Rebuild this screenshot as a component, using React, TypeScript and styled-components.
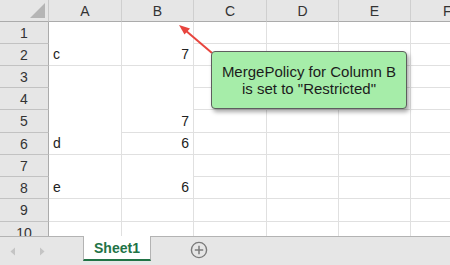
import styled, { createGlobalStyle } from 'styled-components';

const GlobalStyle = createGlobalStyle`
    html, body {
        margin: 0;
        padding: 0;
        background: #ffffff;
    }
    body {
        font-family: 'Liberation Sans', Arial, sans-serif;
    }
`;

const COLS = ['A', 'B', 'C', 'D', 'E', 'F'];
const ROW_HEIGHTS = [22, 22, 22, 22, 23, 22, 22, 22, 23, 22];

// merged cells in column A and B: [startRow, span, text]
const COL_A: [number, number, string][] = [
    [1, 2, 'c'],
    [3, 4, 'd'],
    [7, 2, 'e'],
    [9, 1, ''],
    [10, 1, ''],
];
const COL_B: [number, number, string][] = [
    [1, 2, '7'],
    [3, 3, '7'],
    [6, 1, '6'],
    [7, 2, '6'],
    [9, 1, ''],
    [10, 1, ''],
];

export default function App() {
    return (
        <>
            <GlobalStyle />
            <Window>
                <SheetArea>
                    <Grid>
                        <Corner $row={1} $col={1}>
                            <svg width="15" height="15" viewBox="0 0 15 15">
                                <polygon points="15,0 15,15 0,15" fill="#b5b5b5" />
                            </svg>
                        </Corner>
                        {COLS.map((c, i) => (
                            <ColHeader key={c} $row={1} $col={i + 2} $last={i === COLS.length - 1}>
                                {c}
                            </ColHeader>
                        ))}
                        {ROW_HEIGHTS.map((_, r) => (
                            <RowHeader key={r} $row={r + 2} $col={1}>
                                {r + 1}
                            </RowHeader>
                        ))}
                        {COL_A.map(([start, span, text]) => (
                            <Cell key={'a' + start} $row={start + 1} $col={2} $span={span}>
                                {text}
                            </Cell>
                        ))}
                        {COL_B.map(([start, span, text]) => (
                            <Cell key={'b' + start} $row={start + 1} $col={3} $span={span} $right>
                                {text}
                            </Cell>
                        ))}
                        {[4, 5, 6, 7].map((col) =>
                            ROW_HEIGHTS.map((_, r) => <Cell key={col + '-' + r} $row={r + 2} $col={col} />),
                        )}
                    </Grid>
                    <Arrow width="60" height="40" viewBox="0 0 60 40">
                        <line x1="47" y1="38" x2="20" y2="15" stroke="#e8453e" strokeWidth="2" />
                        <polygon points="14,10 25,13.5 19.5,19.5" fill="#e8453e" />
                    </Arrow>
                    <Callout>
                        MergePolicy for Column B
                        <br />
                        is set to "Restricted"
                    </Callout>
                </SheetArea>
                <TabBar>
                    <NavArrows>
                        <svg width="6" height="9" viewBox="0 0 6 9">
                            <polygon points="5,0.5 5,8.5 0.5,4.5" fill="#c4c4c4" />
                        </svg>
                        <svg width="6" height="9" viewBox="0 0 6 9">
                            <polygon points="1,0.5 1,8.5 5.5,4.5" fill="#c4c4c4" />
                        </svg>
                    </NavArrows>
                    <SheetTab>Sheet1</SheetTab>
                    <AddSheet>
                        <svg width="18" height="18" viewBox="0 0 18 18">
                            <circle cx="9" cy="9" r="7.6" fill="none" stroke="#7b7b7b" strokeWidth="1.4" />
                            <line x1="9" y1="4.8" x2="9" y2="13.2" stroke="#7b7b7b" strokeWidth="1.5" />
                            <line x1="4.8" y1="9" x2="13.2" y2="9" stroke="#7b7b7b" strokeWidth="1.5" />
                        </svg>
                    </AddSheet>
                </TabBar>
            </Window>
        </>
    );
}

const Window = styled.div`
    width: 450px;
    height: 265px;
    overflow: hidden;
    display: flex;
    flex-direction: column;
    background: #ffffff;
`;

const SheetArea = styled.div`
    position: relative;
    height: 236px;
    overflow: hidden;
    flex-shrink: 0;
`;

const Grid = styled.div`
    display: grid;
    grid-template-columns: 49px 73px 72px 73px 72px 72px 60px;
    grid-template-rows: 22px ${ROW_HEIGHTS.map((h) => h + 'px').join(' ')};
    font-size: 14px;
    color: #222222;
`;

type Place = { $row: number; $col: number; $span?: number };

const Placed = styled.div<Place>`
    grid-row: ${(p) => p.$row} / span ${(p) => p.$span ?? 1};
    grid-column: ${(p) => p.$col};
    box-sizing: border-box;
`;

const Corner = styled(Placed)`
    background: #e6e6e6;
    border-right: 1px solid #c9c9c9;
    border-bottom: 1px solid #ababab;
    display: flex;
    justify-content: flex-end;
    align-items: flex-end;
    padding: 0 3px 3px 0;
`;

const ColHeader = styled(Placed)<{ $last?: boolean }>`
    background: #e6e6e6;
    border-right: 1px solid #cfcfcf;
    border-bottom: 1px solid #ababab;
    display: flex;
    align-items: center;
    justify-content: ${(p) => (p.$last ? 'flex-start' : 'center')};
    padding-left: ${(p) => (p.$last ? '32px' : '0')};
    color: #333333;
    font-size: 14px;
`;

const RowHeader = styled(Placed)`
    background: #e6e6e6;
    border-right: 1px solid #ababab;
    border-bottom: 1px solid #c2c2c2;
    display: flex;
    align-items: center;
    justify-content: center;
    color: #333333;
    font-size: 14px;
`;

const Cell = styled(Placed)<{ $right?: boolean }>`
    border-right: 1px solid #e0e0e0;
    border-bottom: 1px solid #e0e0e0;
    display: flex;
    align-items: flex-end;
    justify-content: ${(p) => (p.$right ? 'flex-end' : 'flex-start')};
    padding: 0 4px 3px 4px;
    line-height: 16px;
    background: #ffffff;
`;

const Arrow = styled.svg`
    position: absolute;
    left: 165px;
    top: 15px;
`;

const Callout = styled.div`
    position: absolute;
    left: 211px;
    top: 51px;
    width: 196px;
    height: 58px;
    box-sizing: border-box;
    background: #a6eda9;
    border: 1px solid #5e5e5e;
    border-radius: 4px;
    box-shadow: 2px 3px 4px rgba(0, 0, 0, 0.35);
    display: flex;
    align-items: center;
    justify-content: center;
    text-align: center;
    font-family: 'Liberation Sans', Arial, sans-serif;
    font-size: 15px;
    line-height: 17px;
    color: #1c1c1c;
`;

const TabBar = styled.div`
    flex: 1;
    display: flex;
    align-items: stretch;
    background: #e6e6e6;
    border-top: 1px solid #b3b3b3;
    box-sizing: border-box;
`;

const NavArrows = styled.div`
    width: 83px;
    display: flex;
    align-items: center;
    gap: 23px;
    padding-left: 10px;
    box-sizing: border-box;
`;

const SheetTab = styled.div`
    width: 68px;
    height: 25px;
    margin-top: -1px;
    box-sizing: border-box;
    background: #ffffff;
    border-left: 1px solid #b3b3b3;
    border-right: 1px solid #b3b3b3;
    border-bottom: 2px solid #217346;
    display: flex;
    align-items: center;
    justify-content: center;
    font-family: 'Liberation Sans', Arial, sans-serif;
    font-weight: 700;
    font-size: 14px;
    color: #217346;
`;

const AddSheet = styled.div`
    margin-left: 39px;
    display: flex;
    align-items: center;
    padding-bottom: 2px;
`;
